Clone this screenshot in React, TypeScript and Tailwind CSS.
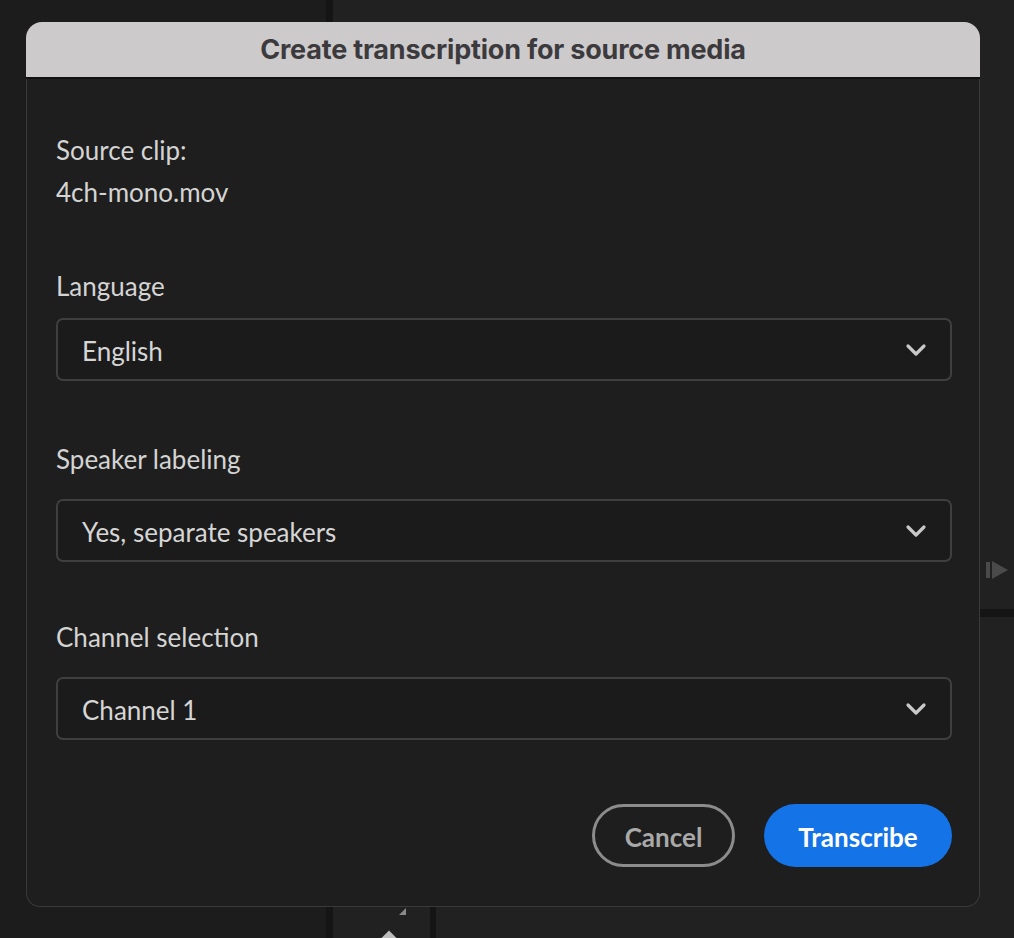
import React from "react";

const Chevron = () => (
  <svg width="22" height="14" viewBox="0 0 22 14" fill="none">
    <path d="M3 3 L11 11 L19 3" stroke="#c9c9c9" strokeWidth="3.2" strokeLinecap="round" strokeLinejoin="round" />
  </svg>
);

const Select = ({ value }: { value: string }) => (
  <div className="h-[63px] w-full rounded-[7px] border-2 border-[#3f3f3f] bg-[#1b1b1b] flex items-center justify-between pl-[24px] pr-[23px]">
    <span className="pt-[3px] text-[26px] text-[#d6d6d6]">{value}</span>
    <Chevron />
  </div>
);

export default function App() {
  return (
    <div
      className="relative w-[1014px] h-[938px] overflow-hidden bg-[#1c1c1c]"
      style={{ fontFamily: "Lato, 'Noto Sans', sans-serif" }}
    >
      {/* background decorations */}
      <div className="absolute left-[326px] top-0 w-[7px] h-[938px] bg-[#151515]" />
      <div className="absolute left-[333px] top-0 w-[681px] h-[938px] bg-[#212121]" />
      <div className="absolute left-[430px] top-[890px] w-[6px] h-[48px] bg-[#151515]" />
      <div className="absolute left-[980px] top-[609px] w-[34px] h-[8px] bg-[#151515]" />
      <div className="absolute left-[986px] top-[562px] w-[4px] h-[16px] bg-[#4a4a4a]" />
      <div
        className="absolute left-[992px] top-[561px] w-0 h-0 border-y-[9px] border-y-transparent border-l-[16px] border-l-[#4a4a4a]"
      />
      <div
        className="absolute left-[399px] top-[908px] w-0 h-0 border-l-[7px] border-l-transparent border-b-[7px] border-b-[#8a8a8a]"
      />
      <div className="absolute left-[383px] top-[933px] w-[12px] h-[12px] rotate-45 bg-[#bdbdbd]" />

      {/* dialog */}
      <div className="relative ml-[26px] mt-[22px] w-[954px]">
        <div className="h-[57px] rounded-t-[16px] bg-[#cdcacc] border-b-[2px] border-[#111111] flex items-center justify-center">
          <span
            className="pt-[1px] text-[27px] font-bold text-[#3c3a3d] tracking-[-0.2px]"
            style={{ fontFamily: "Inter, 'Open Sans', sans-serif" }}
          >
            Create transcription for source media
          </span>
        </div>
        <div className="h-[828px] rounded-b-[14px] border border-t-0 border-[#3a3a3a] bg-[#1e1e1e] pl-[29px] pr-[27px] pt-[56px] flex flex-col">
          <div className="text-[26px] leading-[30px] text-[#d4d4d4]">Source clip:</div>
          <div className="mt-[12px] text-[26px] leading-[30px] text-[#d4d4d4]">4ch-mono.mov</div>

          <div className="mt-[64px] text-[26px] leading-[30px] text-[#d4d4d4]">Language</div>
          <div className="mt-[17px]">
            <Select value="English" />
          </div>

          <div className="mt-[63px] text-[26px] leading-[30px] text-[#d4d4d4]">Speaker labeling</div>
          <div className="mt-[25px]">
            <Select value="Yes, separate speakers" />
          </div>

          <div className="mt-[60px] text-[26px] leading-[30px] text-[#d4d4d4]">Channel selection</div>
          <div className="mt-[25px]">
            <Select value="Channel 1" />
          </div>

          <div className="mt-[64px] flex justify-end gap-[29px]">
            <button className="h-[63px] w-[143px] rounded-full border-[3px] border-[#8c8c8c] pt-[3px] text-[26px] font-bold text-[#a9a9a9]">
              Cancel
            </button>
            <button className="h-[63px] w-[188px] rounded-full bg-[#1473e6] pt-[3px] text-[26px] font-bold text-white">
              Transcribe
            </button>
          </div>
        </div>
      </div>
    </div>
  );
}
